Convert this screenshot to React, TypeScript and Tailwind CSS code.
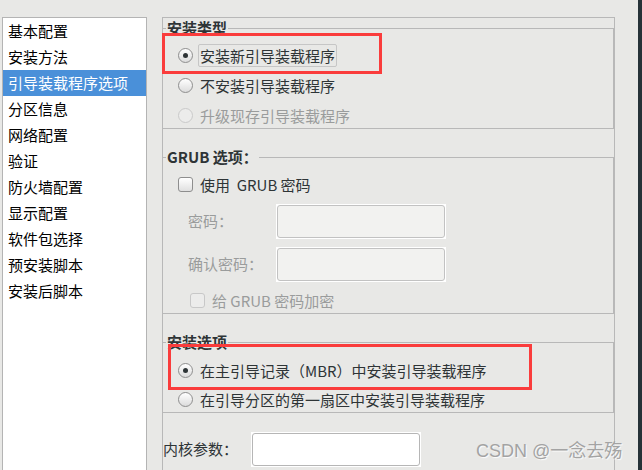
import type { ReactNode } from 'react';

const FONT = "font-['Noto_Sans_CJK_SC','Liberation_Sans',sans-serif]";

const navItems = [
  '基本配置',
  '安装方法',
  '引导装载程序选项',
  '分区信息',
  '网络配置',
  '验证',
  '防火墙配置',
  '显示配置',
  '软件包选择',
  '预安装脚本',
  '安装后脚本',
];

const Radio = ({ checked = false, disabled = false }: { checked?: boolean; disabled?: boolean }) => (
  <span
    className={`flex h-[15px] w-[15px] shrink-0 items-center justify-center rounded-full border ${
      disabled
        ? 'border-[#cacaca] bg-[#ececeb]'
        : 'border-[#8e8e8e] bg-gradient-to-b from-white to-[#dcdcdc]'
    }`}
  >
    {checked && <span className="h-[5px] w-[5px] rounded-full bg-[#2e3436]" />}
  </span>
);

const Checkbox = ({ disabled = false }: { disabled?: boolean }) => (
  <span
    className={`h-[15px] w-[15px] shrink-0 rounded-[3px] border ${
      disabled
        ? 'border-[#c8c8c8] bg-[#ececeb]'
        : 'border-[#8e8e8e] bg-gradient-to-b from-white to-[#e0e0e0]'
    }`}
  />
);

const TextBox = ({ disabled = false, width = 'w-[170px]' }: { disabled?: boolean; width?: string }) => (
  <div className={`${width} h-[35px] bg-white p-[1px]`}>
    <div
      className={`h-full w-full rounded-[3px] border ${
        disabled ? 'border-[#c2c2c2] bg-[#f2f2f0]' : 'border-[#b6b6b6] bg-white'
      }`}
    />
  </div>
);

const Frame = ({ title, className = '', children }: { title: string; className?: string; children: ReactNode }) => (
  <fieldset className={`border-y border-r border-l-0 border-[#b8b8b8] ${className}`}>
    <legend className="ml-[3px] px-[1px] text-[15px] font-bold leading-[22px] text-[#2e3436]">{title}</legend>
    {children}
  </fieldset>
);

const OptionRow = ({ children }: { children: ReactNode }) => (
  <div className="flex h-[26px] items-center pl-[15px]">{children}</div>
);

export default function App() {
  return (
    <div className={`relative flex h-[470px] w-[642px] overflow-hidden bg-[#e8e8e6] ${FONT}`}>
      <div className="flex flex-1 pt-[17px]">
        <aside className="ml-[2px] flex h-[460px] w-[145px] flex-col border-x border-t border-[#b4b4b4] bg-white">
          {navItems.map((item, i) => (
            <div
              key={item}
              className={`h-[26px] pl-[5px] text-[15px] leading-[26px] ${
                i === 2 ? 'bg-[#4a90d9] text-white' : 'text-black'
              }`}
            >
              {item}
            </div>
          ))}
        </aside>

        <main className="ml-[15px] w-[453px] border-x border-t border-[#b8b8b8] pt-[2px]">
          <div className="h-full overflow-hidden">
            <div className="-mt-[3px] text-[15px] text-[#2e3436]">
              <Frame title="安装类型">
                <div className="flex flex-col gap-[4px] pt-[3px]">
                  <OptionRow>
                    <Radio checked />
                    <span className="ml-[5px] flex h-[23px] items-center rounded-[2px] border border-[#c6c6c6] px-[1px] leading-none">
                      安装新引导装载程序
                    </span>
                  </OptionRow>
                  <OptionRow>
                    <Radio />
                    <span className="ml-[7px] leading-none">不安装引导装载程序</span>
                  </OptionRow>
                  <OptionRow>
                    <Radio disabled />
                    <span className="ml-[7px] leading-none text-[#9a9c9c]">升级现存引导装载程序</span>
                  </OptionRow>
                </div>
              </Frame>

              <Frame title="GRUB 选项：" className="mt-[17px]">
                <div className="pt-[3px]">
                  <OptionRow>
                    <Checkbox />
                    <span className="ml-[7px] leading-none">使用&nbsp;&nbsp;GRUB 密码</span>
                  </OptionRow>
                  <div className="mt-[7px] flex items-center pl-[25px]">
                    <span className="w-[88px] text-[#9a9c9c]">密码：</span>
                    <TextBox disabled />
                  </div>
                  <div className="mt-[8px] flex items-center pl-[25px]">
                    <span className="w-[88px] text-[#9a9c9c]">确认密码：</span>
                    <TextBox disabled />
                  </div>
                  <div className="mt-[5px] flex h-[26px] items-center pl-[27px]">
                    <Checkbox disabled />
                    <span className="ml-[7px] leading-none text-[#9a9c9c]">给 GRUB 密码加密</span>
                  </div>
                </div>
              </Frame>

              <Frame title="安装选项" className="mt-[17px]">
                <div className="flex flex-col gap-[3px] pt-[4px]">
                  <OptionRow>
                    <Radio checked />
                    <span className="ml-[7px] leading-none">在主引导记录（MBR）中安装引导装载程序</span>
                  </OptionRow>
                  <OptionRow>
                    <Radio />
                    <span className="ml-[7px] leading-none">在引导分区的第一扇区中安装引导装载程序</span>
                  </OptionRow>
                </div>
              </Frame>

              <div className="mt-[19px] flex items-center">
                <span className="w-[88px]">内核参数：</span>
                <TextBox />
              </div>
            </div>
          </div>
        </main>
      </div>
      <div className="w-[4px] bg-[#263238]" />

      {/* annotation boxes */}
      <div className="pointer-events-none absolute left-[162px] top-[33px] h-[41px] w-[220px] border-[3px] border-[#fa3c3c]" />
      <div className="pointer-events-none absolute left-[168px] top-[344px] h-[46px] w-[364px] border-[3px] border-[#fa3c3c]" />

      <div className="pointer-events-none absolute left-[476px] top-[439px] font-['Liberation_Sans','Noto_Sans_CJK_SC',sans-serif] text-[18px] leading-[24px] text-[#a3a3a3] [text-shadow:1px_1px_1px_rgba(255,255,255,0.9)]">
        CSDN @一念去殇
      </div>
    </div>
  );
}
